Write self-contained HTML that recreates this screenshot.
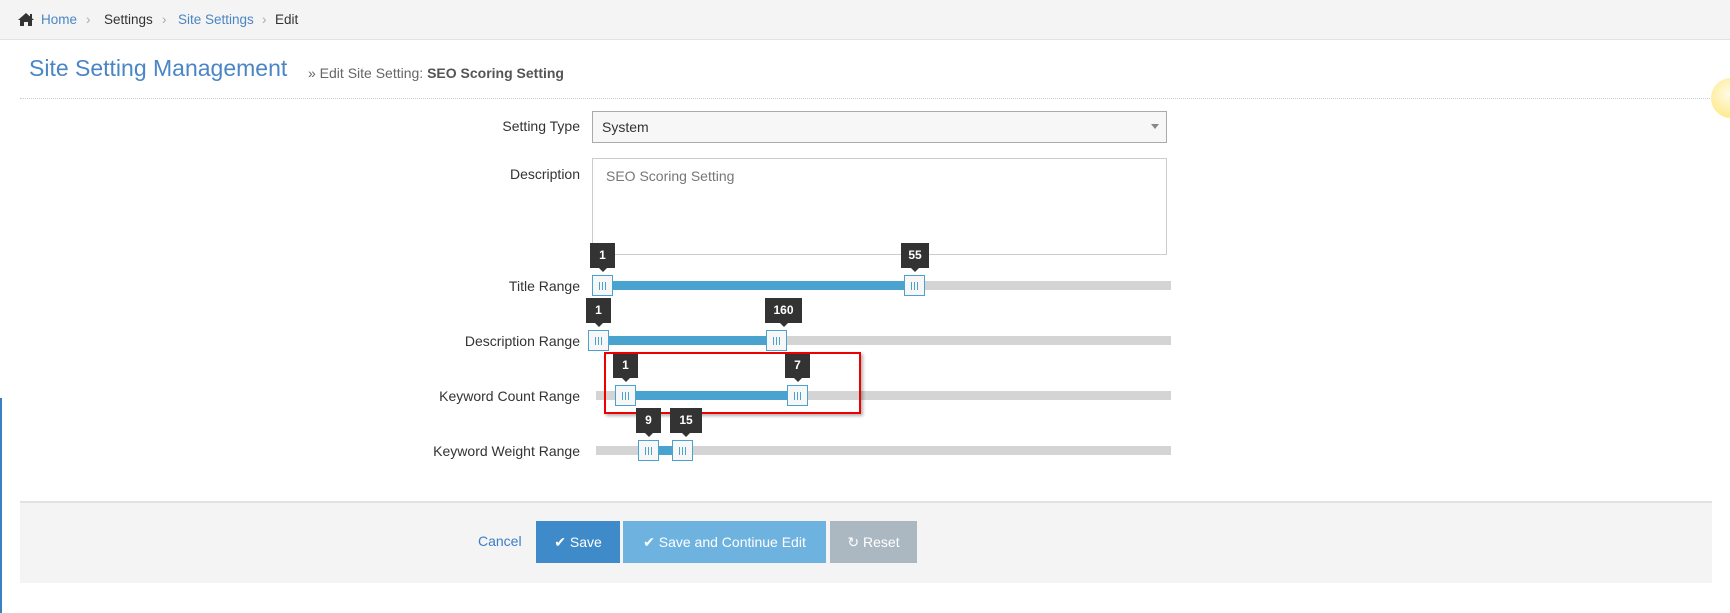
<!DOCTYPE html>
<html><head><meta charset="utf-8"><style>
*{margin:0;padding:0;box-sizing:border-box}
body{width:1730px;height:613px;background:#fff;font-family:"Liberation Sans",sans-serif;position:relative;overflow:hidden;color:#333}
.a{position:absolute}
.crumb{top:0;left:0;width:1730px;height:40px;background:#f4f4f4;border-bottom:1px solid #e2e2e2;font-size:13.5px}
.crumb span{position:absolute;top:12px}
.lbl{position:absolute;right:1150px;font-size:14px;color:#333;white-space:nowrap}
.track{position:absolute;height:9px;background:#d4d4d4}
.fill{position:absolute;height:9px;background:#4aa3cf}
.h{position:absolute;width:21px;height:21px;background:#f7f7f7;border:1px solid #4aa3cf}
.h:after{content:"";position:absolute;left:6px;top:6px;width:7px;height:8px;background:repeating-linear-gradient(90deg,#4aa3cf 0,#4aa3cf 1px,transparent 1px,transparent 3px)}
.tt{position:absolute;height:25px;background:#333;color:#fff;font-weight:bold;font-size:12px;text-align:center;line-height:25px}
.tt:after{content:"";position:absolute;left:50%;margin-left:-4px;bottom:-4px;border-left:4px solid transparent;border-right:4px solid transparent;border-top:4px solid #333}
.btn{position:absolute;top:521px;height:42px;color:#fff;font-size:14px;line-height:42px;text-align:center}
</style></head><body>
<div class="a crumb">
<svg class="a" style="left:17px;top:12px" width="18" height="15" viewBox="0 0 18 15"><path d="M9 1 L1 8 L3 8 L3 14 L7 14 L7 10 L11 10 L11 14 L15 14 L15 8 L17 8 Z" fill="#333"/><rect x="13" y="2" width="2" height="4" fill="#333"/></svg>
<span style="left:41px;color:#4a86c5">Home</span>
<span style="left:86px;color:#aaa">›</span>
<span style="left:104px;color:#333">Settings</span>
<span style="left:162px;color:#aaa">›</span>
<span style="left:178px;color:#4a86c5">Site Settings</span>
<span style="left:262px;color:#aaa">›</span>
<span style="left:275px;color:#333">Edit</span>
</div>
<div class="a" style="left:29px;top:55px;font-size:23px;color:#4a86c5;white-space:nowrap">Site Setting Management</div>
<div class="a" style="left:308px;top:65px;font-size:14px;color:#666;white-space:nowrap">» Edit Site Setting: <b style="color:#555">SEO Scoring Setting</b></div>
<div class="a" style="left:20px;top:98px;width:1692px;border-top:1px dotted #ccc"></div>
<div class="a" style="left:1711px;top:78px;width:40px;height:40px;border-radius:50%;background:radial-gradient(circle at 45% 40%,#fffbe8,#ffe98a 75%,#f3d26a)"></div>

<div class="lbl" style="top:118px">Setting Type</div>
<div class="a" style="left:592px;top:111px;width:575px;height:32px;background:#f7f7f7;border:1px solid #aaa;font-size:14px;line-height:30px;padding-left:9px">System</div>
<div class="a" style="left:1151px;top:124px;border-left:4px solid transparent;border-right:4px solid transparent;border-top:5px solid #888"></div>
<div class="lbl" style="top:166px">Description</div>
<div class="a" style="left:592px;top:158px;width:575px;height:97px;border:1px solid #ccc;font-size:14px;color:#777;padding:9px 13px">SEO Scoring Setting</div>

<div class="lbl" style="top:278px">Title Range</div>
<div class="track" style="left:596px;top:281px;width:575px"></div>
<div class="fill" style="left:602px;top:281px;width:310px"></div>
<div class="h" style="left:592px;top:275px"></div><div class="h" style="left:904px;top:275px"></div>
<div class="tt" style="left:590px;top:243px;width:25px">1</div><div class="tt" style="left:901px;top:243px;width:28px">55</div>

<div class="lbl" style="top:333px">Description Range</div>
<div class="track" style="left:596px;top:336px;width:575px"></div>
<div class="fill" style="left:598px;top:336px;width:178px"></div>
<div class="h" style="left:588px;top:330px"></div><div class="h" style="left:766px;top:330px"></div>
<div class="tt" style="left:586px;top:298px;width:25px">1</div><div class="tt" style="left:765px;top:298px;width:37px">160</div>

<div class="lbl" style="top:388px">Keyword Count Range</div>
<div class="track" style="left:596px;top:391px;width:575px"></div>
<div class="fill" style="left:625px;top:391px;width:172px"></div>
<div class="h" style="left:615px;top:385px"></div><div class="h" style="left:787px;top:385px"></div>
<div class="tt" style="left:613px;top:353px;width:25px">1</div><div class="tt" style="left:785px;top:353px;width:25px">7</div>
<div class="a" style="left:604px;top:352px;width:257px;height:62px;border:2px solid #e00;box-shadow:2px 2px 3px rgba(0,0,0,.3)"></div>

<div class="lbl" style="top:443px">Keyword Weight Range</div>
<div class="track" style="left:596px;top:446px;width:575px"></div>
<div class="fill" style="left:648px;top:446px;width:34px"></div>
<div class="h" style="left:638px;top:440px"></div><div class="h" style="left:672px;top:440px"></div>
<div class="tt" style="left:636px;top:408px;width:25px">9</div><div class="tt" style="left:670px;top:408px;width:32px">15</div>

<div class="a" style="left:0;top:398px;width:2px;height:215px;background:#3b7fc4"></div>
<div class="a" style="left:20px;top:501px;width:1692px;height:82px;background:#f4f4f4;border-top:2px solid #e2e2e2"></div>
<div class="a" style="left:478px;top:533px;font-size:14px;color:#3b7fc4">Cancel</div>
<div class="btn" style="left:536px;width:84px;background:#3f8bca">✔ Save</div>
<div class="btn" style="left:623px;width:203px;background:#6eb2e0">✔ Save and Continue Edit</div>
<div class="btn" style="left:830px;width:87px;background:#abb8c2">↻ Reset</div>
</body></html>
